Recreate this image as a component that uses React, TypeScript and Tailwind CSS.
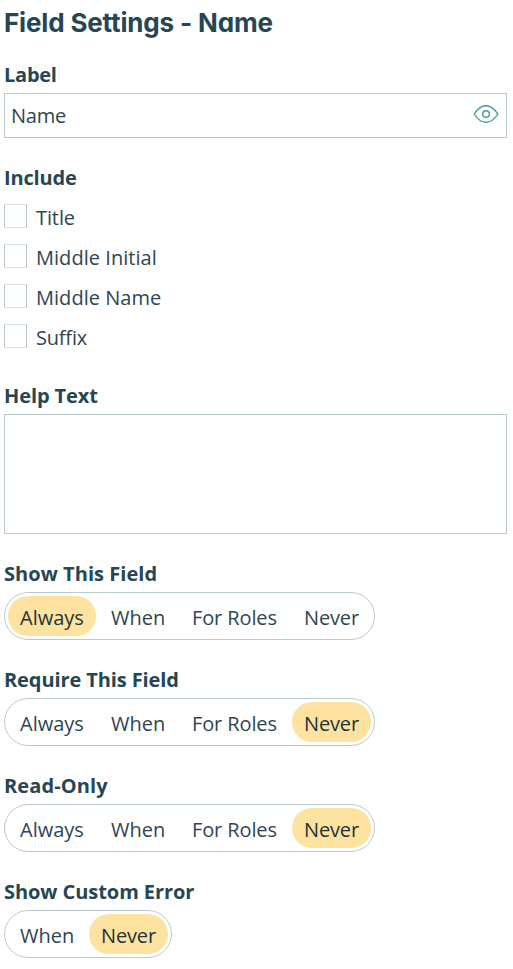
const BODY = "font-['Open_Sans','Noto_Sans',sans-serif]";

function Heading({ text, track }: { text: string; track: string }) {
  return <h2 className={`h-[30px] text-[20px] leading-[30px] font-bold whitespace-nowrap text-[#264653] ${track}`}>{text}</h2>;
}

const OPTIONS: Record<string, { width: string; track: string }> = {
  Always: { width: 'w-[88px]', track: 'tracking-[0px]' },
  When: { width: 'w-[78px]', track: 'tracking-[0px]' },
  'For Roles': { width: 'w-[109px]', track: 'tracking-[-0.12px]' },
  Never: { width: 'w-[79px]', track: 'tracking-[-0.15px]' },
};

function Segments({ options, selected }: { options: string[]; selected: string }) {
  return (
    <div role="radiogroup" className="flex h-12 w-fit gap-[3px] rounded-full border border-[#b9cbc9] p-[3px]">
      {options.map((name) => (
        <button
          key={name}
          role="radio"
          aria-checked={name === selected}
          className={`h-10 rounded-full pl-3 pt-[3px] text-left text-[20px] leading-[36px] whitespace-nowrap ${OPTIONS[name].width} ${OPTIONS[name].track} ${name === selected ? 'bg-[#fee3a0] text-[#22333b]' : 'text-[#2e4653]'}`}
        >
          {name}
        </button>
      ))}
    </div>
  );
}

const CHECKS = [
  { name: 'Title', track: 'tracking-[-0.1px]' },
  { name: 'Middle Initial', track: 'tracking-[0.04px]' },
  { name: 'Middle Name', track: 'tracking-[0.04px]' },
  { name: 'Suffix', track: 'tracking-[-0.2px]' },
];

const ALL = ['Always', 'When', 'For Roles', 'Never'];

export default function App() {
  return (
    <main className={`h-[969px] w-[513px] overflow-hidden bg-white pl-1 text-[#2e4653] ${BODY}`}>
      <h1 className="h-[60px] pt-[3px] font-['Inter',sans-serif] text-[26px] leading-[40px] font-bold tracking-[-0.16px] whitespace-nowrap text-[#264653] [font-feature-settings:'cv11']">
        Field Settings - Name
      </h1>
      <Heading text="Label" track="tracking-[-0.25px]" />
      <div className="mt-[3px] flex h-[45px] w-[503px] items-center justify-between border border-[#b9cbc9] pl-[6px] pr-[7px]">
        <span className="text-[20px] leading-[40px] tracking-[-0.2px]">Name</span>
        <svg className="mb-[3px] h-[26px] w-[26px]" viewBox="0 0 26 26" fill="none" stroke="#459b98" strokeWidth="1.4">
          <path d="M1.2 13C4.2 8.2 8 4.7 13 4.7S21.8 8.2 24.8 13C21.8 17.8 18 21.3 13 21.3S4.2 17.8 1.2 13Z" />
          <circle cx="13" cy="13" r="3.3" />
        </svg>
      </div>
      <div className="mt-[25px]">
        <Heading text="Include" track="tracking-[-0.15px]" />
        <div className="mt-[3px]">
          {CHECKS.map((c) => (
            <label key={c.name} className="flex h-10 items-start gap-[9px]">
              <span className="mt-[8px] h-[24px] w-[23px] shrink-0 border border-x-[#b9cbc9] border-y-[#dce5e3]" />
              <span className={`pt-[3px] text-[20px] leading-[38px] whitespace-nowrap ${c.track}`}>{c.name}</span>
            </label>
          ))}
        </div>
      </div>
      <div className="mt-[25px]">
        <Heading text="Help Text" track="tracking-[-0.1px]" />
        <div className="mt-[3px] h-[120px] w-[503px] border border-[#b9cbc9]" />
      </div>
      <section className="mt-[25px] flex flex-col gap-[25px]">
        <div className="flex flex-col gap-[3px]">
          <Heading text="Show This Field" track="tracking-[0.05px]" />
          <Segments options={ALL} selected="Always" />
        </div>
        <div className="flex flex-col gap-[3px]">
          <Heading text="Require This Field" track="tracking-[-0.1px]" />
          <Segments options={ALL} selected="Never" />
        </div>
        <div className="flex flex-col gap-[3px]">
          <Heading text="Read-Only" track="tracking-[0.1px]" />
          <Segments options={ALL} selected="Never" />
        </div>
        <div className="flex flex-col gap-[3px]">
          <Heading text="Show Custom Error" track="tracking-[-0.06px]" />
          <Segments options={['When', 'Never']} selected="Never" />
        </div>
      </section>
    </main>
  );
}
